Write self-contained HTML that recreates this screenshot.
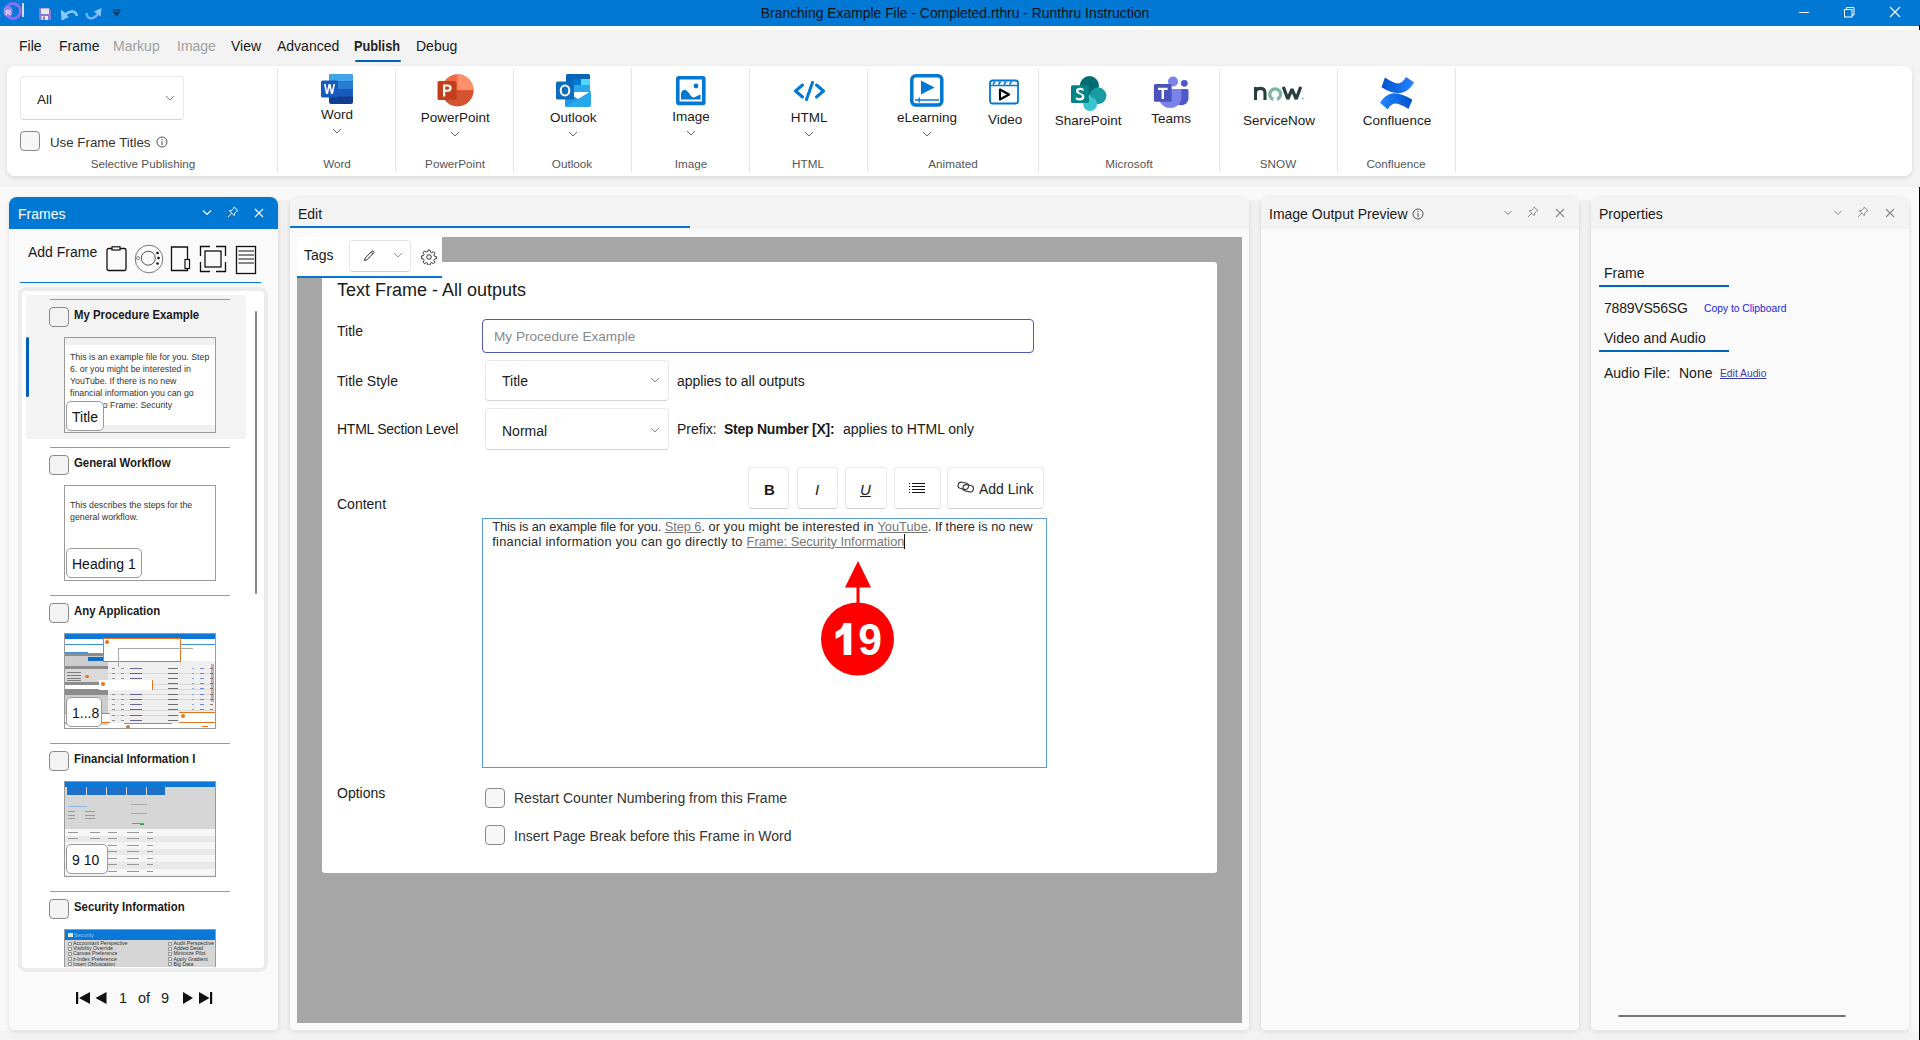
<!DOCTYPE html>
<html><head><meta charset="utf-8">
<style>
*{box-sizing:border-box;margin:0;padding:0}
html,body{width:1920px;height:1040px;overflow:hidden;background:#f9f9f9;font-family:"Liberation Sans",sans-serif;color:#1a1a1a;position:relative}
.a{position:absolute;white-space:nowrap}
#tb{left:0;top:0;width:1920px;height:26px;background:#0078d4}
#tbw{left:0;top:26px;width:1919px;height:4px;background:#fff}
#topbg{left:0;top:30px;width:1920px;height:157px;background:#f3f3f3}
.menu{top:38px;font-size:14px;color:#1a1a1a}
.ribbon{left:7px;top:66px;width:1905px;height:110px;background:#fff;border-radius:8px;box-shadow:0 2px 5px rgba(0,0,0,.10)}
.sep{top:69px;width:1px;height:103px;background:#e5e5e5}
.glab{top:156px;font-size:12px;color:#555;transform:translateX(-50%)}
.blab{font-size:14px;color:#1a1a1a;transform:translateX(-50%)}
.chev{width:7px;height:7px;border-right:1.2px solid #555;border-bottom:1.2px solid #555;transform:translateX(-50%) rotate(45deg)}
.panel{background:#fafafa;border-radius:8px 8px 5px 5px;box-shadow:0 0 4px rgba(0,0,0,.07),0 3px 5px rgba(0,0,0,.06)}
.phead{background:#f3f3f3;border-radius:8px 8px 0 0}
.lbl{font-size:14px;color:#1a1a1a}
.dd{background:#fff;border:1px solid #e8e8e8;border-bottom-color:#d4d4d4;border-radius:4px}
.tbtn{background:#fff;border:1px solid #e8e8e8;border-bottom-color:#d0d0d0;border-radius:4px}
.ct{font-size:12.8px;color:#2a2a2a}
.lk{color:#777;text-decoration-color:#777}
.cb{width:20px;height:20px;border:1px solid #8a8a8a;border-radius:4px;background:#f7f7f7}
.thumb{width:152px;border:1px solid #9a9a9a;background:#fff}
.tht{font-size:8.8px;line-height:12px;color:#333}
.badge{height:30px;background:#fff;border:1px solid #9a9a9a;border-radius:5px;font-size:14px;color:#111;padding:7px 0 0 5px}
</style></head><body>
<!-- title bar -->
<div class="a" id="tb"></div>
<div class="a" id="tbw"></div>
<div class="a" id="topbg"></div>
<div class="a" style="left:278px;top:200px;width:12px;height:840px;background:#f0f0f0"></div>
<div class="a" style="left:1249px;top:200px;width:12px;height:840px;background:#f0f0f0"></div>
<div class="a" style="left:1579px;top:200px;width:12px;height:840px;background:#f0f0f0"></div>
<div class="a" style="left:0;top:1031px;width:1919px;height:9px;background:#f3f3f3"></div>
<div class="a" style="left:1919px;top:25px;width:1px;height:5px;background:#000"></div>
<div class="a" style="left:1919px;top:187px;width:1px;height:853px;background:#000"></div>
<div class="a" style="left:0;top:5px;width:960px;text-align:right;font-size:13.9px;color:#111;left:755px;width:400px;text-align:center">Branching Example File - Completed.rthru - Runthru Instruction</div>

<!-- menu -->
<div class="a menu" style="left:19px">File</div>
<div class="a menu" style="left:59px">Frame</div>
<div class="a menu" style="left:113px;color:#a0a0a0">Markup</div>
<div class="a menu" style="left:177px;color:#a0a0a0">Image</div>
<div class="a menu" style="left:231px">View</div>
<div class="a menu" style="left:277px">Advanced</div>
<div class="a menu" style="left:354px;font-weight:bold;color:#222;transform:scaleX(0.91);transform-origin:0 0">Publish</div>
<div class="a menu" style="left:416px">Debug</div>
<div class="a" style="left:354.5px;top:59.5px;width:46px;height:2.5px;background:#005fb8;border-radius:1.5px"></div>

<!-- ribbon -->
<div class="a ribbon"></div>
<div class="a sep" style="left:277px"></div>
<div class="a sep" style="left:395px"></div>
<div class="a sep" style="left:513px"></div>
<div class="a sep" style="left:631px"></div>
<div class="a sep" style="left:749px"></div>
<div class="a sep" style="left:867px"></div>
<div class="a sep" style="left:1038px"></div>
<div class="a sep" style="left:1219px"></div>
<div class="a sep" style="left:1337px"></div>
<div class="a sep" style="left:1455px"></div>



<!-- ribbon content -->
<div class="a dd" style="left:20px;top:76px;width:164px;height:44px"></div>
<div class="a" style="left:37px;top:91.5px;font-size:13.5px">All</div>
<svg class="a" style="left:165px;top:95px" width="10" height="6" viewBox="0 0 10 6"><path d="M1 1 L5 5 L9 1" fill="none" stroke="#888" stroke-width="1"/></svg>
<div class="a cb" style="left:20px;top:131px"></div>
<div class="a" style="left:50px;top:135px;font-size:13.3px;color:#333">Use Frame Titles</div>
<svg class="a" style="left:156px;top:136px" width="12" height="12" viewBox="0 0 12 12"><circle cx="6" cy="6" r="5" fill="none" stroke="#444" stroke-width="0.9"/><rect x="5.5" y="5" width="1" height="4" fill="#444"/><rect x="5.5" y="3" width="1" height="1" fill="#444"/></svg>
<div class="a" style="left:43px;width:200px;text-align:center;top:157.4px;font-size:11.7px;color:#555;">Selective Publishing</div>
<div class="a" style="left:237px;width:200px;text-align:center;top:157.2px;font-size:11.7px;color:#555;">Word</div>
<div class="a" style="left:355px;width:200px;text-align:center;top:157.2px;font-size:11.7px;color:#555;">PowerPoint</div>
<div class="a" style="left:472px;width:200px;text-align:center;top:157.2px;font-size:11.7px;color:#555;">Outlook</div>
<div class="a" style="left:591px;width:200px;text-align:center;top:157.2px;font-size:11.7px;color:#555;">Image</div>
<div class="a" style="left:708px;width:200px;text-align:center;top:157.2px;font-size:11.7px;color:#555;">HTML</div>
<div class="a" style="left:853px;width:200px;text-align:center;top:157.2px;font-size:11.7px;color:#555;">Animated</div>
<div class="a" style="left:1029px;width:200px;text-align:center;top:157.2px;font-size:11.7px;color:#555;">Microsoft</div>
<div class="a" style="left:1178px;width:200px;text-align:center;top:157.2px;font-size:11.7px;color:#555;">SNOW</div>
<div class="a" style="left:1296px;width:200px;text-align:center;top:157.2px;font-size:11.7px;color:#555;">Confluence</div>
<div class="a" style="left:237px;width:200px;text-align:center;top:106.5px;font-size:13.5px;color:#1a1a1a;">Word</div>
<div class="a" style="left:355.2px;width:200px;text-align:center;top:109.8px;font-size:13.5px;color:#1a1a1a;">PowerPoint</div>
<div class="a" style="left:473.20000000000005px;width:200px;text-align:center;top:109.6px;font-size:13.5px;color:#1a1a1a;">Outlook</div>
<div class="a" style="left:591.1px;width:200px;text-align:center;top:108.6px;font-size:13.5px;color:#1a1a1a;">Image</div>
<div class="a" style="left:709.2px;width:200px;text-align:center;top:109.8px;font-size:13.5px;color:#1a1a1a;">HTML</div>
<div class="a" style="left:827px;width:200px;text-align:center;top:109.8px;font-size:13.5px;color:#1a1a1a;">eLearning</div>
<div class="a" style="left:905.1px;width:200px;text-align:center;top:112.2px;font-size:13.5px;color:#1a1a1a;">Video</div>
<div class="a" style="left:988.2px;width:200px;text-align:center;top:113.3px;font-size:13.5px;color:#1a1a1a;">SharePoint</div>
<div class="a" style="left:1071.1px;width:200px;text-align:center;top:111.4px;font-size:13.5px;color:#1a1a1a;">Teams</div>
<div class="a" style="left:1179.1px;width:200px;text-align:center;top:112.8px;font-size:13.5px;color:#1a1a1a;">ServiceNow</div>
<div class="a" style="left:1297px;width:200px;text-align:center;top:112.8px;font-size:13.5px;color:#1a1a1a;">Confluence</div>
<svg class="a" style="left:332px;top:128px" width="10" height="6" viewBox="0 0 10 6"><path d="M1 1 L5 5 L9 1" fill="none" stroke="#666" stroke-width="1"/></svg>
<svg class="a" style="left:450px;top:131px" width="10" height="6" viewBox="0 0 10 6"><path d="M1 1 L5 5 L9 1" fill="none" stroke="#666" stroke-width="1"/></svg>
<svg class="a" style="left:568px;top:131px" width="10" height="6" viewBox="0 0 10 6"><path d="M1 1 L5 5 L9 1" fill="none" stroke="#666" stroke-width="1"/></svg>
<svg class="a" style="left:686px;top:130px" width="10" height="6" viewBox="0 0 10 6"><path d="M1 1 L5 5 L9 1" fill="none" stroke="#666" stroke-width="1"/></svg>
<svg class="a" style="left:804px;top:131px" width="10" height="6" viewBox="0 0 10 6"><path d="M1 1 L5 5 L9 1" fill="none" stroke="#666" stroke-width="1"/></svg>
<svg class="a" style="left:922px;top:131px" width="10" height="6" viewBox="0 0 10 6"><path d="M1 1 L5 5 L9 1" fill="none" stroke="#666" stroke-width="1"/></svg>
<svg class="a" style="left:321px;top:74px" width="33" height="31" viewBox="0 0 33 31">
<rect x="8" y="0" width="24" height="30" rx="2" fill="#103f91"/>
<path d="M10 0 H30 A2 2 0 0 1 32 2 V7.5 H8 V2 A2 2 0 0 1 10 0Z" fill="#41a5ee"/>
<rect x="8" y="7.5" width="24" height="7.5" fill="#2b7cd3"/>
<rect x="8" y="15" width="24" height="7.5" fill="#185abd"/>
<rect x="0" y="6.5" width="17" height="17" rx="1.5" fill="#1958bc"/>
<path d="M3 10 L5 20 L7 20 L8.5 13.5 L10 20 L12 20 L14 10 L12.3 10 L11 17 L9.5 10 L7.5 10 L6 17 L4.7 10Z" fill="#fff"/>
</svg>
<svg class="a" style="left:437px;top:74px" width="37" height="33" viewBox="0 0 37 33">
<circle cx="20.5" cy="16.3" r="16" fill="#ed6c47"/>
<path d="M20.5 0.3 A16 16 0 0 1 36.5 16.3 H20.5Z" fill="#ff8f6b"/>
<path d="M4.5 16.3 A16 16 0 0 0 36.5 16.3 H4.5Z" fill="#d35230"/>
<rect x="0.5" y="7" width="19" height="19" rx="1.5" fill="#c43e1c"/>
<path d="M6 10.5 H11 A3.6 3.6 0 0 1 11 17.7 H8.2 V22.5 H6Z M8.2 12.4 V15.8 H10.7 A1.7 1.7 0 0 0 10.7 12.4Z" fill="#fff"/>
</svg>
<svg class="a" style="left:556px;top:74px" width="36" height="33" viewBox="0 0 36 33">
<rect x="10" y="0" width="24" height="18" rx="1.5" fill="#0364b8"/>
<rect x="17" y="5" width="8" height="6" fill="#0078d4"/><rect x="25" y="5" width="9" height="6" fill="#50d9ff"/>
<rect x="17" y="11" width="8" height="7" fill="#28a8ea"/><rect x="25" y="11" width="9" height="7" fill="#28a8ea"/>
<rect x="10" y="11" width="7" height="7" fill="#0078d4"/>
<path d="M9 17 L22 25 L35 17 V31 A2 2 0 0 1 33 33 H11 A2 2 0 0 1 9 31Z" fill="#28a8ea"/>
<path d="M9 17 L22 25 L9 33Z" fill="#1490df" opacity=".6"/>
<rect x="0" y="7.5" width="18" height="18" rx="1.5" fill="#0f6cbd"/>
<ellipse cx="9" cy="16.5" rx="4.3" ry="5" fill="none" stroke="#fff" stroke-width="2"/>
</svg>
<svg class="a" style="left:676px;top:76px" width="30" height="30" viewBox="0 0 30 30">
<rect x="1.8" y="1.8" width="26" height="25.6" rx="1" fill="none" stroke="#0078d4" stroke-width="3.6"/>
<path d="M5 23.5 V17 Q7 12.5 10 14 Q13 16.5 15 20 Q17 22.5 20 20.5 L24.5 18.5 V23.5Z" fill="#0078d4"/>
<circle cx="20" cy="10" r="2.4" fill="#0078d4"/>
</svg>
<svg class="a" style="left:793px;top:81px" width="33" height="20" viewBox="0 0 33 20">
<path d="M9.5 4 L2.5 10 L9.5 16 M23.5 4 L30.5 10 L23.5 16 M19.5 1.5 L13.5 18.5" fill="none" stroke="#0078d4" stroke-width="3" stroke-linecap="round" stroke-linejoin="round"/>
</svg>
<svg class="a" style="left:910px;top:74px" width="34" height="34" viewBox="0 0 34 34">
<rect x="1.8" y="1.8" width="30" height="29.3" rx="4" fill="none" stroke="#0078d4" stroke-width="3.5"/>
<path d="M11 6.5 L24.5 13.5 L11 20.5Z" fill="#0078d4"/>
<path d="M5 26 H29" stroke="#0078d4" stroke-width="1.5"/><rect x="8.5" y="23.5" width="1.4" height="5" fill="#0078d4"/>
</svg>
<svg class="a" style="left:989px;top:79px" width="31" height="26" viewBox="0 0 31 26">
<rect x="1" y="1.5" width="28" height="23" rx="2.5" fill="none" stroke="#0078d4" stroke-width="1.8"/>
<path d="M1 6.5 H29" stroke="#0078d4" stroke-width="1.5"/>
<path d="M4 5.5 L6 2.5 M9.5 5.5 L11.5 2.5 M15 5.5 L17 2.5 M20.5 5.5 L22.5 2.5" stroke="#0078d4" stroke-width="1.6"/>
<path d="M11 10.5 L20 15.5 L11 20.5Z" fill="none" stroke="#000" stroke-width="2.1" stroke-linejoin="round"/>
</svg>
<svg class="a" style="left:1069px;top:75px" width="38" height="36" viewBox="0 0 38 36">
<circle cx="20.4" cy="10.7" r="9.6" fill="#036c70"/>
<circle cx="29.1" cy="20.8" r="8.3" fill="#1a9ba1"/>
<circle cx="21.1" cy="29" r="6.9" fill="#37c6d0"/>
<rect x="2" y="10.2" width="18" height="17.8" rx="1.5" fill="#038387"/>
<path d="M14.5 13.8 Q13 12.8 11 12.8 Q7 12.8 7 16 Q7 18.2 10.5 19.3 Q13 20 13 21.5 Q13 23.2 10.8 23.2 Q8.5 23.2 6.8 22 V24.5 Q8.5 25.4 10.7 25.4 Q15.4 25.4 15.4 21.7 Q15.4 19.5 12 18.3 Q9.4 17.5 9.4 16 Q9.4 14.9 11.2 14.9 Q13 14.9 14.5 16Z" fill="#fff"/>
</svg>
<svg class="a" style="left:1153px;top:75px" width="37" height="35" viewBox="0 0 37 35">
<path d="M21 14 H34 A1.5 1.5 0 0 1 35.5 15.5 V23 A7 7 0 0 1 21 23Z" fill="#5059c9"/>
<circle cx="31.3" cy="8.3" r="3.4" fill="#5059c9"/>
<circle cx="20" cy="6.5" r="5" fill="#7b83eb"/>
<path d="M6 14 H27 A1.5 1.5 0 0 1 28.5 15.5 V24 A11.5 11.5 0 0 1 6 24Z" fill="#7b83eb"/>
<rect x="0.9" y="9" width="17.8" height="17.8" rx="1.5" fill="#4b53bc"/>
<path d="M5 12.8 H14.6 V15 H11 V24 H8.6 V15 H5Z" fill="#fff"/>
</svg>
<svg class="a" style="left:1253px;top:86px" width="53" height="16" viewBox="0 0 53 16">
<path d="M2.5 14 V0.9 M2.5 6.5 Q2.8 2.4 7.5 2.4 Q12 2.4 12 7 V14" fill="none" stroke="#293e40" stroke-width="3.1"/>
<path d="M20.3 13.4 A5.4 5.4 0 1 1 24.1 13.4" fill="none" stroke="#81b5a1" stroke-width="3.3"/>
<path d="M30.3 0.9 L34.8 13 L39 3.2 L43.2 13 L47.7 0.9" fill="none" stroke="#293e40" stroke-width="3.2" stroke-linejoin="bevel"/>
<circle cx="49.7" cy="12.5" r="1.1" fill="#a9b9b3"/>
</svg>
<svg class="a" style="left:1380px;top:77px" width="35" height="33" viewBox="0 0 35 33">
<defs><linearGradient id="cg1" x1="0" y1="0" x2="1" y2="0"><stop offset="0" stop-color="#0052cc"/><stop offset="1" stop-color="#2684ff"/></linearGradient>
<linearGradient id="cg2" x1="1" y1="0" x2="0" y2="0"><stop offset="0" stop-color="#0052cc"/><stop offset="1" stop-color="#2684ff"/></linearGradient></defs>
<path d="M1.5 10.2 L4.9 0.5 Q13 6 18 6.5 Q22 6.5 26.2 0.1 L34 5.6 Q29 14 22.7 15.6 Q14 18 1.5 10.2 Z" fill="url(#cg1)"/>
<path d="M32.4 22.8 L28.4 32 Q20 26.5 15 26.5 Q10.5 26.8 7.8 32.5 L0 25.7 Q5 18 11.5 16.5 Q20 15 32.4 22.8 Z" fill="url(#cg2)"/>
</svg>
<svg class="a" style="left:2px;top:1px" width="20" height="19" viewBox="0 0 20 19">
<circle cx="11" cy="10" r="7.5" fill="none" stroke="#8b6df0" stroke-width="3"/><path d="M13 1.5 L17 3.5 L13 6Z" fill="#8b6df0"/>
<rect x="1.5" y="5.5" width="9" height="10" rx="4" fill="#9a7ff5"/><text x="3.2" y="13.6" font-size="8" font-family="Liberation Sans" font-weight="bold" fill="#e9e3ff">R</text>
</svg>
<div class="a" style="left:22px;top:3px;width:1.5px;height:14px;background:#d8d8d8"></div>
<svg class="a" style="left:38px;top:7px" width="14" height="14" viewBox="0 0 14 14">
<path d="M1 1 H11 L13 3 V13 H1Z" fill="#8a7ad6"/><rect x="3" y="1.5" width="8" height="5.5" fill="#e8e8e8"/><rect x="3.5" y="9" width="6.5" height="4" fill="#e8e8e8"/><rect x="5" y="9.5" width="2" height="3.5" fill="#8a7ad6"/>
</svg>
<svg class="a" style="left:61px;top:7px" width="17" height="14" viewBox="0 0 17 14">
<path d="M2 13 L1 5 L4.5 7.5 Q8 4 12 4.5 Q15.5 5.5 15.8 9" fill="none" stroke="#8ac6ff" stroke-width="2.4"/><path d="M0.5 13.5 L1 4 L8 10Z" fill="#8ac6ff"/>
</svg>
<svg class="a" style="left:85px;top:7px" width="17" height="14" viewBox="0 0 17 14">
<path d="M1.5 6 Q2 12.5 8 11 Q11 10 13.5 6.5" fill="none" stroke="#6eb5ff" stroke-width="2.4"/><path d="M16.5 1 L15.5 9.5 L9 4.5Z" fill="#8ac6ff"/>
</svg>
<svg class="a" style="left:112px;top:9px" width="9" height="8" viewBox="0 0 9 8"><rect x="0.5" y="0.5" width="8" height="1.2" fill="#0a3a6a"/><path d="M0.5 2.8 H8.5 L4.5 7.5Z" fill="#0a3a6a"/></svg>
<div class="a" style="left:1799px;top:12px;width:10px;height:1px;background:#fff"></div>
<svg class="a" style="left:1843px;top:6px" width="13" height="12" viewBox="0 0 13 12"><rect x="1.5" y="3.5" width="7.5" height="7.5" fill="none" stroke="#fff" stroke-width="1"/><path d="M3.5 3.5 V1.5 H11 V9 H9" fill="none" stroke="#fff" stroke-width="1"/></svg>
<svg class="a" style="left:1889px;top:6px" width="12" height="12" viewBox="0 0 12 12"><path d="M1 1 L11 11 M11 1 L1 11" stroke="#fff" stroke-width="1.1"/></svg>

<!-- frames panel -->
<div class="a panel" style="left:9px;top:197px;width:269px;height:833px"></div>
<div class="a" style="left:9px;top:197px;width:269px;height:32px;background:#0078d4;border-radius:8px 8px 0 0"></div>
<div class="a" style="left:18px;top:206px;font-size:14px;color:#fff">Frames</div>


<!-- frames content -->
<svg class="a" style="left:202px;top:209px" width="10" height="7" viewBox="0 0 10 7"><path d="M1 1.5 L5 5.5 L9 1.5" fill="none" stroke="#fff" stroke-width="1.1"/></svg>
<svg class="a" style="left:227px;top:206px" width="12" height="12" viewBox="0 0 12 12"><path d="M7.2 1 L11 4.8 L9.5 5.3 L7.6 7.2 L7.2 9.6 L2.4 4.8 L4.8 4.4 L6.7 2.5 Z M4.8 7.2 L1 11" fill="none" stroke="#fff" stroke-width="1"/></svg>
<svg class="a" style="left:254px;top:208px" width="10" height="10" viewBox="0 0 10 10"><path d="M1 1 L9 9 M9 1 L1 9" fill="none" stroke="#fff" stroke-width="1.1"/></svg>
<div class="a" style="left:28px;top:244px;font-size:14px;color:#1a1a1a">Add Frame</div>
<svg class="a" style="left:106px;top:246px" width="22" height="26" viewBox="0 0 22 26"><rect x="1" y="2.5" width="19" height="22" rx="1.5" fill="none" stroke="#111" stroke-width="1.3"/><rect x="6" y="0.8" width="8" height="3.2" fill="#fff" stroke="#111" stroke-width="1.2"/></svg>
<svg class="a" style="left:134px;top:244px" width="30" height="30" viewBox="0 0 30 30"><circle cx="15" cy="15" r="13.8" fill="none" stroke="#777" stroke-width="1"/><circle cx="14.3" cy="14.2" r="7" fill="none" stroke="#555" stroke-width="1"/><circle cx="4" cy="14.2" r="1.5" fill="none" stroke="#777" stroke-width="0.9"/><circle cx="23.5" cy="9" r="1.3" fill="#111"/><circle cx="24.5" cy="14" r="1.3" fill="#111"/><circle cx="23.5" cy="19.5" r="1.3" fill="#111"/></svg>
<svg class="a" style="left:170px;top:246px" width="22" height="27" viewBox="0 0 22 27"><path d="M1.5 1 H17.5 V24.5 H1.5 Z" fill="none" stroke="#111" stroke-width="1.3"/><rect x="15" y="13.5" width="4.5" height="9" fill="#fff" stroke="#111" stroke-width="1.2"/></svg>
<svg class="a" style="left:199px;top:245px" width="28" height="28" viewBox="0 0 28 28"><path d="M1.5 11 V1.5 H11 M17 1.5 H26.5 V11 M26.5 17 V26.5 H17 M11 26.5 H1.5 V17" fill="none" stroke="#111" stroke-width="1.3"/><rect x="6" y="6" width="16" height="16" fill="none" stroke="#111" stroke-width="1.3"/></svg>
<svg class="a" style="left:235px;top:245px" width="22" height="30" viewBox="0 0 22 30"><rect x="1.5" y="1.5" width="19" height="27" fill="none" stroke="#111" stroke-width="1.3"/><path d="M3.5 6 H19 M3.5 10 H19 M3.5 14 H19 M3.5 18 H19" stroke="#111" stroke-width="1.1"/></svg>
<div class="a" style="left:20px;top:282px;width:241px;height:1px;background:#0078d4"></div>

<div class="a" style="left:18px;top:287px;width:250px;height:685px;background:#fff;border:4px solid #ececec;border-radius:8px"></div>
<div class="a" style="left:26px;top:295px;width:220px;height:144px;background:#f3f3f3;border-radius:3px"></div>
<div class="a" style="left:26px;top:337px;width:3px;height:60px;background:#005fb8;border-radius:2px"></div>
<div class="a" style="left:255px;top:311px;width:2px;height:283px;background:#8a8a8a;border-radius:1px"></div>
<div class="a" style="left:50px;top:299px;width:180px;height:1px;background:#9a9a9a"></div>
<div class="a cb" style="left:49px;top:307px;background:#f3f3f3"></div>
<div class="a" style="left:74px;top:307px;font-size:13px;font-weight:bold;color:#1a1a1a;transform:scaleX(0.875);transform-origin:0 0">My Procedure Example</div>
<div class="a thumb" style="left:64px;top:337px;height:96px" id="th0"></div>
<div class="a" style="left:50px;top:447px;width:180px;height:1px;background:#9a9a9a"></div>
<div class="a cb" style="left:49px;top:455px;background:#f3f3f3"></div>
<div class="a" style="left:74px;top:455px;font-size:13px;font-weight:bold;color:#1a1a1a;transform:scaleX(0.875);transform-origin:0 0">General Workflow</div>
<div class="a thumb" style="left:64px;top:485px;height:96px" id="th1"></div>
<div class="a" style="left:50px;top:595px;width:180px;height:1px;background:#9a9a9a"></div>
<div class="a cb" style="left:49px;top:603px;background:#f3f3f3"></div>
<div class="a" style="left:74px;top:603px;font-size:13px;font-weight:bold;color:#1a1a1a;transform:scaleX(0.875);transform-origin:0 0">Any Application</div>
<div class="a thumb" style="left:64px;top:633px;height:96px" id="th2"></div>
<div class="a" style="left:50px;top:743px;width:180px;height:1px;background:#9a9a9a"></div>
<div class="a cb" style="left:49px;top:751px;background:#f3f3f3"></div>
<div class="a" style="left:74px;top:751px;font-size:13px;font-weight:bold;color:#1a1a1a;transform:scaleX(0.875);transform-origin:0 0">Financial Information I</div>
<div class="a thumb" style="left:64px;top:781px;height:96px" id="th3"></div>
<div class="a" style="left:50px;top:891px;width:180px;height:1px;background:#9a9a9a"></div>
<div class="a cb" style="left:49px;top:899px;background:#f3f3f3"></div>
<div class="a" style="left:74px;top:899px;font-size:13px;font-weight:bold;color:#1a1a1a;transform:scaleX(0.875);transform-origin:0 0">Security Information</div>
<div class="a thumb" style="left:64px;top:929px;height:38px;overflow:hidden;border-bottom:none" id="th4"></div>

<div class="a" style="left:65px;top:338px;width:150px;height:7px;background:#f0f0f0"></div>
<div class="a" style="left:65px;top:425px;width:150px;height:7px;background:#f0f0f0"></div>
<div class="a tht" style="left:70px;top:351px">This is an example file for you. Step<br>6. or you might be interested in<br>YouTube. If there is no new<br>financial information you can go<br>directly to Frame: Security</div>
<div class="a badge" style="left:66px;top:401px;width:38px">Title</div>
<div class="a tht" style="left:70px;top:499px">This describes the steps for the<br>general workflow.</div>
<div class="a badge" style="left:66px;top:548px;width:76px">Heading 1</div>

<div class="a" style="left:65px;top:634px;width:150px;height:94px;background:#fff;overflow:hidden">
 <div class="a" style="left:0;top:0;width:150px;height:4.5px;background:#0b78d8"></div>
 <div class="a" style="left:0;top:9.5px;width:150px;height:1px;background:#3d8fdc"></div>
 <div class="a" style="left:0;top:17.5px;width:23px;height:1.2px;background:#3d8fdc"></div>
 <div class="a" style="left:0;top:18.5px;width:43px;height:72px;background:#cdcdcd"></div>
 <div class="a" style="left:0;top:19px;width:43px;height:3px;background:#8c8c8c"></div>
 <div class="a" style="left:23px;top:23px;width:15px;height:4px;background:#0b6fd0"></div>
 <div class="a" style="left:0;top:32px;width:43px;height:3px;background:#8c8c8c"></div>
 <div class="a" style="left:0;top:35px;width:43px;height:13px;background:#dadada"></div>
 <div class="a" style="left:20px;top:40.5px;width:4px;height:3px;background:#e8731e;border-radius:2px"></div>
 <div class="a" style="left:0;top:48px;width:43px;height:3px;background:#8c8c8c"></div>
 <div class="a" style="left:0;top:51px;width:43px;height:4px;background:#fff"></div>
 <div class="a" style="left:0;top:55px;width:43px;height:6px;background:#8c8c8c"></div>
 <div class="a" style="left:43px;top:27px;width:107px;height:62px;background:#efefef"></div>
 <div class="a" style="left:43px;top:35px;width:107px;height:50px;background:repeating-linear-gradient(#efefef 0 4.5px,#d9d9d9 4.5px 5.2px)"></div>
 <div class="a" style="left:146px;top:30px;width:2.5px;height:38px;background:#b5b5b5"></div>
 <div class="a" style="left:47px;top:33.5px;width:3px;height:1.3px;background:#777;opacity:.75"></div>
 <div class="a" style="left:56px;top:33.5px;width:3px;height:1.3px;background:#777;opacity:.75"></div>
 <div class="a" style="left:65px;top:33.5px;width:12px;height:1.3px;background:#3a3a7a;opacity:.75"></div>
 <div class="a" style="left:103px;top:33.5px;width:10px;height:1.3px;background:#444;opacity:.75"></div>
 <div class="a" style="left:127px;top:33.5px;width:2px;height:1.3px;background:#5a8fd8;opacity:.75"></div>
 <div class="a" style="left:135px;top:33.5px;width:4px;height:1.3px;background:#3a6ad0;opacity:.75"></div>
 <div class="a" style="left:145px;top:33.5px;width:3px;height:1.3px;background:#8a4a3a;opacity:.75"></div>
 <div class="a" style="left:47px;top:38.5px;width:3px;height:1.3px;background:#777;opacity:.75"></div>
 <div class="a" style="left:56px;top:38.5px;width:3px;height:1.3px;background:#777;opacity:.75"></div>
 <div class="a" style="left:65px;top:38.5px;width:12px;height:1.3px;background:#3a3a7a;opacity:.75"></div>
 <div class="a" style="left:103px;top:38.5px;width:10px;height:1.3px;background:#444;opacity:.75"></div>
 <div class="a" style="left:127px;top:38.5px;width:2px;height:1.3px;background:#5a8fd8;opacity:.75"></div>
 <div class="a" style="left:135px;top:38.5px;width:4px;height:1.3px;background:#3a6ad0;opacity:.75"></div>
 <div class="a" style="left:145px;top:38.5px;width:3px;height:1.3px;background:#8a4a3a;opacity:.75"></div>
 <div class="a" style="left:47px;top:44px;width:3px;height:1.3px;background:#777;opacity:.75"></div>
 <div class="a" style="left:56px;top:44px;width:3px;height:1.3px;background:#777;opacity:.75"></div>
 <div class="a" style="left:65px;top:44px;width:12px;height:1.3px;background:#3a3a7a;opacity:.75"></div>
 <div class="a" style="left:103px;top:44px;width:10px;height:1.3px;background:#444;opacity:.75"></div>
 <div class="a" style="left:127px;top:44px;width:2px;height:1.3px;background:#5a8fd8;opacity:.75"></div>
 <div class="a" style="left:135px;top:44px;width:4px;height:1.3px;background:#3a6ad0;opacity:.75"></div>
 <div class="a" style="left:145px;top:44px;width:3px;height:1.3px;background:#8a4a3a;opacity:.75"></div>
 <div class="a" style="left:103px;top:49px;width:10px;height:1.3px;background:#444;opacity:.75"></div>
 <div class="a" style="left:127px;top:49px;width:2px;height:1.3px;background:#5a8fd8;opacity:.75"></div>
 <div class="a" style="left:135px;top:49px;width:4px;height:1.3px;background:#3a6ad0;opacity:.75"></div>
 <div class="a" style="left:145px;top:49px;width:3px;height:1.3px;background:#8a4a3a;opacity:.75"></div>
 <div class="a" style="left:103px;top:54px;width:10px;height:1.3px;background:#444;opacity:.75"></div>
 <div class="a" style="left:127px;top:54px;width:2px;height:1.3px;background:#5a8fd8;opacity:.75"></div>
 <div class="a" style="left:135px;top:54px;width:4px;height:1.3px;background:#3a6ad0;opacity:.75"></div>
 <div class="a" style="left:145px;top:54px;width:3px;height:1.3px;background:#8a4a3a;opacity:.75"></div>
 <div class="a" style="left:47px;top:59.5px;width:3px;height:1.3px;background:#777;opacity:.75"></div>
 <div class="a" style="left:56px;top:59.5px;width:3px;height:1.3px;background:#777;opacity:.75"></div>
 <div class="a" style="left:65px;top:59.5px;width:12px;height:1.3px;background:#3a3a7a;opacity:.75"></div>
 <div class="a" style="left:103px;top:59.5px;width:10px;height:1.3px;background:#444;opacity:.75"></div>
 <div class="a" style="left:127px;top:59.5px;width:2px;height:1.3px;background:#5a8fd8;opacity:.75"></div>
 <div class="a" style="left:135px;top:59.5px;width:4px;height:1.3px;background:#3a6ad0;opacity:.75"></div>
 <div class="a" style="left:145px;top:59.5px;width:3px;height:1.3px;background:#8a4a3a;opacity:.75"></div>
 <div class="a" style="left:47px;top:64.5px;width:3px;height:1.3px;background:#777;opacity:.75"></div>
 <div class="a" style="left:56px;top:64.5px;width:3px;height:1.3px;background:#777;opacity:.75"></div>
 <div class="a" style="left:65px;top:64.5px;width:12px;height:1.3px;background:#3a3a7a;opacity:.75"></div>
 <div class="a" style="left:103px;top:64.5px;width:10px;height:1.3px;background:#444;opacity:.75"></div>
 <div class="a" style="left:127px;top:64.5px;width:2px;height:1.3px;background:#5a8fd8;opacity:.75"></div>
 <div class="a" style="left:135px;top:64.5px;width:4px;height:1.3px;background:#3a6ad0;opacity:.75"></div>
 <div class="a" style="left:145px;top:64.5px;width:3px;height:1.3px;background:#8a4a3a;opacity:.75"></div>
 <div class="a" style="left:47px;top:70px;width:3px;height:1.3px;background:#777;opacity:.75"></div>
 <div class="a" style="left:56px;top:70px;width:3px;height:1.3px;background:#777;opacity:.75"></div>
 <div class="a" style="left:65px;top:70px;width:12px;height:1.3px;background:#3a3a7a;opacity:.75"></div>
 <div class="a" style="left:103px;top:70px;width:10px;height:1.3px;background:#444;opacity:.75"></div>
 <div class="a" style="left:127px;top:70px;width:2px;height:1.3px;background:#5a8fd8;opacity:.75"></div>
 <div class="a" style="left:135px;top:70px;width:4px;height:1.3px;background:#3a6ad0;opacity:.75"></div>
 <div class="a" style="left:145px;top:70px;width:3px;height:1.3px;background:#8a4a3a;opacity:.75"></div>
 <div class="a" style="left:47px;top:75px;width:3px;height:1.3px;background:#777;opacity:.75"></div>
 <div class="a" style="left:56px;top:75px;width:3px;height:1.3px;background:#777;opacity:.75"></div>
 <div class="a" style="left:65px;top:75px;width:12px;height:1.3px;background:#3a3a7a;opacity:.75"></div>
 <div class="a" style="left:103px;top:75px;width:10px;height:1.3px;background:#444;opacity:.75"></div>
 <div class="a" style="left:127px;top:75px;width:2px;height:1.3px;background:#5a8fd8;opacity:.75"></div>
 <div class="a" style="left:135px;top:75px;width:4px;height:1.3px;background:#3a6ad0;opacity:.75"></div>
 <div class="a" style="left:145px;top:75px;width:3px;height:1.3px;background:#8a4a3a;opacity:.75"></div>
 <div class="a" style="left:47px;top:80.5px;width:3px;height:1.3px;background:#777;opacity:.75"></div>
 <div class="a" style="left:56px;top:80.5px;width:3px;height:1.3px;background:#777;opacity:.75"></div>
 <div class="a" style="left:65px;top:80.5px;width:12px;height:1.3px;background:#3a3a7a;opacity:.75"></div>
 <div class="a" style="left:103px;top:80.5px;width:10px;height:1.3px;background:#444;opacity:.75"></div>
 <div class="a" style="left:127px;top:80.5px;width:2px;height:1.3px;background:#5a8fd8;opacity:.75"></div>
 <div class="a" style="left:135px;top:80.5px;width:4px;height:1.3px;background:#3a6ad0;opacity:.75"></div>
 <div class="a" style="left:145px;top:80.5px;width:3px;height:1.3px;background:#8a4a3a;opacity:.75"></div>
 <div class="a" style="left:47px;top:85.5px;width:3px;height:1.3px;background:#777;opacity:.75"></div>
 <div class="a" style="left:56px;top:85.5px;width:3px;height:1.3px;background:#777;opacity:.75"></div>
 <div class="a" style="left:65px;top:85.5px;width:12px;height:1.3px;background:#3a3a7a;opacity:.75"></div>
 <div class="a" style="left:103px;top:85.5px;width:10px;height:1.3px;background:#444;opacity:.75"></div>
 <div class="a" style="left:127px;top:85.5px;width:2px;height:1.3px;background:#5a8fd8;opacity:.75"></div>
 <div class="a" style="left:135px;top:85.5px;width:4px;height:1.3px;background:#3a6ad0;opacity:.75"></div>
 <div class="a" style="left:145px;top:85.5px;width:3px;height:1.3px;background:#8a4a3a;opacity:.75"></div>
 <div class="a" style="left:2px;top:38px;width:14px;height:1.2px;background:#666;opacity:.8"></div>
 <div class="a" style="left:2px;top:41px;width:14px;height:1.2px;background:#666;opacity:.8"></div>
 <div class="a" style="left:2px;top:43.5px;width:14px;height:1.2px;background:#666;opacity:.8"></div>
 <div class="a" style="left:2px;top:46px;width:14px;height:1.2px;background:#666;opacity:.8"></div>
 <div class="a" style="left:38px;top:4px;width:78px;height:23.5px;background:#fff;border:1.2px solid #e8731e"></div>
 <div class="a" style="left:40px;top:5.5px;width:4px;height:4px;background:#e8731e;border-radius:2px"></div>
 <div class="a" style="left:53px;top:14px;width:75px;height:19px;border-top:1px solid #aaa;border-left:1px solid #aaa"></div>
 <div class="a" style="left:34px;top:46px;width:54px;height:10px;background:#fff;border-right:1.2px solid #e8731e"></div>
 <div class="a" style="left:36px;top:48px;width:4px;height:4px;background:#e8731e;border-radius:2px"></div>
 <div class="a" style="left:0;top:79px;width:45px;height:10px;background:#fff;border-top:1.2px solid #e8731e;border-bottom:1.2px solid #e8731e"></div>
 <div class="a" style="left:114px;top:78px;width:36px;height:11px;background:#fff;border-top:1.2px solid #e8731e;border-bottom:1.2px solid #e8731e"></div>
 <div class="a" style="left:116px;top:80px;width:4px;height:4px;background:#e8731e;border-radius:2px"></div>
 <div class="a" style="left:45px;top:89px;width:105px;height:6px;background:#fff"></div>
 <div class="a" style="left:59px;top:88.5px;width:48px;height:1.2px;background:#e8731e"></div>
 <div class="a" style="left:61px;top:91px;width:4px;height:4px;background:#e8731e;border-radius:2px"></div>
 <div class="a" style="left:45px;top:93.5px;width:15px;height:1.2px;background:#3d8fdc"></div>
 <div class="a" style="left:137px;top:91.5px;width:6px;height:1.5px;background:#e8731e"></div>
</div>
<div class="a badge" style="left:66px;top:697px;width:36px">1...8</div>
<div class="a" style="left:65px;top:782px;width:150px;height:94px;background:#d6d6d6;overflow:hidden">
 <div class="a" style="left:0;top:0;width:150px;height:4.5px;background:#0b78d8"></div>
 <div class="a" style="left:2px;top:4.5px;width:98px;height:8px;background:repeating-linear-gradient(90deg,#1e6fc8 0 19px,#d6d6d6 19px 20px)"></div>
 <div class="a" style="left:3px;top:24px;width:19px;height:1px;background:#8ab8ea"></div>
 <div class="a" style="left:0;top:47px;width:150px;height:48px;background:repeating-linear-gradient(#f6f6f6 0 6.6px,#e9e9e9 6.6px 13.2px)"></div>
 <div class="a" style="left:75px;top:41px;width:4px;height:2px;background:#2ca02c"></div>
 <div class="a" style="left:3px;top:49.5px;width:10px;height:1.2px;background:#999"></div>
 <div class="a" style="left:25px;top:49.5px;width:10px;height:1.2px;background:#999"></div>
 <div class="a" style="left:43px;top:49.5px;width:9px;height:1.2px;background:#999"></div>
 <div class="a" style="left:62px;top:49.5px;width:12px;height:1.2px;background:#999"></div>
 <div class="a" style="left:82px;top:49.5px;width:6px;height:1.2px;background:#999"></div>
 <div class="a" style="left:3px;top:56px;width:10px;height:1.2px;background:#999"></div>
 <div class="a" style="left:25px;top:56px;width:10px;height:1.2px;background:#999"></div>
 <div class="a" style="left:43px;top:56px;width:9px;height:1.2px;background:#999"></div>
 <div class="a" style="left:62px;top:56px;width:12px;height:1.2px;background:#999"></div>
 <div class="a" style="left:82px;top:56px;width:6px;height:1.2px;background:#999"></div>
 <div class="a" style="left:3px;top:62.5px;width:10px;height:1.2px;background:#999"></div>
 <div class="a" style="left:25px;top:62.5px;width:10px;height:1.2px;background:#999"></div>
 <div class="a" style="left:43px;top:62.5px;width:9px;height:1.2px;background:#999"></div>
 <div class="a" style="left:62px;top:62.5px;width:12px;height:1.2px;background:#999"></div>
 <div class="a" style="left:82px;top:62.5px;width:6px;height:1.2px;background:#999"></div>
 <div class="a" style="left:3px;top:69px;width:10px;height:1.2px;background:#999"></div>
 <div class="a" style="left:25px;top:69px;width:10px;height:1.2px;background:#999"></div>
 <div class="a" style="left:43px;top:69px;width:9px;height:1.2px;background:#999"></div>
 <div class="a" style="left:62px;top:69px;width:12px;height:1.2px;background:#999"></div>
 <div class="a" style="left:82px;top:69px;width:6px;height:1.2px;background:#999"></div>
 <div class="a" style="left:3px;top:75.5px;width:10px;height:1.2px;background:#999"></div>
 <div class="a" style="left:25px;top:75.5px;width:10px;height:1.2px;background:#999"></div>
 <div class="a" style="left:43px;top:75.5px;width:9px;height:1.2px;background:#999"></div>
 <div class="a" style="left:62px;top:75.5px;width:12px;height:1.2px;background:#999"></div>
 <div class="a" style="left:82px;top:75.5px;width:6px;height:1.2px;background:#999"></div>
 <div class="a" style="left:3px;top:82px;width:10px;height:1.2px;background:#999"></div>
 <div class="a" style="left:25px;top:82px;width:10px;height:1.2px;background:#999"></div>
 <div class="a" style="left:43px;top:82px;width:9px;height:1.2px;background:#999"></div>
 <div class="a" style="left:62px;top:82px;width:12px;height:1.2px;background:#999"></div>
 <div class="a" style="left:82px;top:82px;width:6px;height:1.2px;background:#999"></div>
 <div class="a" style="left:3px;top:88.5px;width:10px;height:1.2px;background:#999"></div>
 <div class="a" style="left:25px;top:88.5px;width:10px;height:1.2px;background:#999"></div>
 <div class="a" style="left:43px;top:88.5px;width:9px;height:1.2px;background:#999"></div>
 <div class="a" style="left:62px;top:88.5px;width:12px;height:1.2px;background:#999"></div>
 <div class="a" style="left:82px;top:88.5px;width:6px;height:1.2px;background:#999"></div>
 <div class="a" style="left:3px;top:29px;width:7px;height:1.2px;background:#999"></div>
 <div class="a" style="left:20px;top:29px;width:10px;height:1.2px;background:#999"></div>
 <div class="a" style="left:3px;top:32.5px;width:7px;height:1.2px;background:#999"></div>
 <div class="a" style="left:20px;top:32.5px;width:10px;height:1.2px;background:#999"></div>
 <div class="a" style="left:3px;top:36px;width:7px;height:1.2px;background:#999"></div>
 <div class="a" style="left:20px;top:36px;width:10px;height:1.2px;background:#999"></div>
 <div class="a" style="left:66px;top:22px;width:16px;height:1px;background:#aaa"></div>
 <div class="a" style="left:66px;top:31px;width:16px;height:1px;background:#aaa"></div>
 <div class="a" style="left:67px;top:41px;width:12px;height:1.2px;background:#888"></div>
</div>
<div class="a badge" style="left:66px;top:844px;width:42px">9 10</div>
<div class="a" style="left:65px;top:930px;width:150px;height:37px;background:#d6d6d6;overflow:hidden">
 <div class="a" style="left:0;top:0;width:150px;height:10px;background:#0b78d8"></div>
 <div class="a" style="left:3px;top:2.5px;width:4.5px;height:4.5px;background:#dfe8d8"></div>
 <div class="a" style="left:9px;top:1.8px;font-size:5.5px;color:#9cc6f0">Security</div>
 <div class="a" style="left:2.5px;top:11.7px;width:4px;height:4px;border:0.6px solid #999;background:#e4e4e4"></div>
 <div class="a" style="left:8px;top:11.2px;font-size:5.2px;line-height:5px;color:#333">Accountant Perspective</div>
 <div class="a" style="left:103px;top:11.7px;width:4px;height:4px;border:0.6px solid #999;background:#e4e4e4"></div>
 <div class="a" style="left:108.5px;top:11.2px;font-size:5.2px;line-height:5px;color:#333">Audit Perspective</div>
 <div class="a" style="left:2.5px;top:16.8px;width:4px;height:4px;border:0.6px solid #999;background:#e4e4e4"></div>
 <div class="a" style="left:8px;top:16.3px;font-size:5.2px;line-height:5px;color:#333">Visibility Override</div>
 <div class="a" style="left:103px;top:16.8px;width:4px;height:4px;border:0.6px solid #999;background:#e4e4e4"></div>
 <div class="a" style="left:108.5px;top:16.3px;font-size:5.2px;line-height:5px;color:#333">Added Detail</div>
 <div class="a" style="left:2.5px;top:21.9px;width:4px;height:4px;border:0.6px solid #999;background:#e4e4e4"></div>
 <div class="a" style="left:8px;top:21.4px;font-size:5.2px;line-height:5px;color:#333">Canvas Preference</div>
 <div class="a" style="left:103px;top:21.9px;width:4px;height:4px;border:0.6px solid #999;background:#e4e4e4"></div>
 <div class="a" style="left:108.5px;top:21.4px;font-size:5.2px;line-height:5px;color:#333">Minimize Pilot</div>
 <div class="a" style="left:2.5px;top:27.0px;width:4px;height:4px;border:0.6px solid #999;background:#e4e4e4"></div>
 <div class="a" style="left:8px;top:26.5px;font-size:5.2px;line-height:5px;color:#333">z-Index Preference</div>
 <div class="a" style="left:103px;top:27.0px;width:4px;height:4px;border:0.6px solid #999;background:#e4e4e4"></div>
 <div class="a" style="left:108.5px;top:26.5px;font-size:5.2px;line-height:5px;color:#333">Apply Gradient</div>
 <div class="a" style="left:2.5px;top:32.1px;width:4px;height:4px;border:0.6px solid #999;background:#e4e4e4"></div>
 <div class="a" style="left:8px;top:31.6px;font-size:5.2px;line-height:5px;color:#333">Insert Obfuscation</div>
 <div class="a" style="left:103px;top:32.1px;width:4px;height:4px;border:0.6px solid #999;background:#e4e4e4"></div>
 <div class="a" style="left:108.5px;top:31.6px;font-size:5.2px;line-height:5px;color:#333">Big Data</div>
</div>
<svg class="a" style="left:75px;top:991px" width="140" height="14" viewBox="0 0 140 14">
<rect x="1" y="1" width="2.2" height="12" fill="#111"/><path d="M15 1 L4 7 L15 13 Z" fill="#111"/>
<path d="M31.5 1 L20.5 7 L31.5 13 Z" fill="#111"/>
<path d="M108 1 L118 7 L108 13 Z" fill="#111"/>
<path d="M124 1 L134.5 7 L124 13 Z" fill="#111"/><rect x="135" y="1" width="2.2" height="12" fill="#111"/>
</svg>
<div class="a" style="left:119px;top:989.5px;font-size:14.5px;color:#1a1a1a">1</div>
<div class="a" style="left:138px;top:989.5px;font-size:14.5px;color:#1a1a1a">of</div>
<div class="a" style="left:161px;top:989.5px;font-size:14.5px;color:#1a1a1a">9</div>

<!-- edit panel -->
<div class="a panel" style="left:290px;top:197px;width:959px;height:833px"></div>
<div class="a phead" style="left:290px;top:197px;width:959px;height:32px"></div>
<div class="a" style="left:298px;top:206px;font-size:14px">Edit</div>
<div class="a" style="left:290px;top:226px;width:400px;height:2px;background:#0078d4"></div>


<!-- edit content -->
<div class="a" style="left:297px;top:237px;width:945px;height:786px;background:#a6a6a6"></div>
<div class="a" style="left:322px;top:262px;width:895px;height:611px;background:#fff;border-radius:3px"></div>
<div class="a" style="left:297px;top:237px;width:145px;height:40px;background:#fff"></div>
<div class="a" style="left:297px;top:276px;width:145px;height:1.5px;background:#0078d4"></div>
<div class="a" style="left:304px;top:247px;font-size:14px">Tags</div>
<div class="a" style="left:349px;top:240px;width:62px;height:32px;background:#fff;border:1px solid #e5e5e5;border-bottom-color:#d0d0d0;border-radius:4px"></div>
<svg class="a" style="left:363px;top:250px" width="12" height="12" viewBox="0 0 12 12"><path d="M1.5 10.5 L2.2 8 L9 1.2 Q9.8 0.6 10.6 1.4 Q11.3 2.2 10.7 2.9 L4 9.8 Z M8 2.2 L9.8 4" fill="none" stroke="#333" stroke-width="1"/></svg>
<svg class="a" style="left:393px;top:252px" width="10" height="6" viewBox="0 0 10 6"><path d="M1 1 L5 5 L9 1" fill="none" stroke="#999" stroke-width="1"/></svg>
<svg class="a" style="left:421px;top:249px" width="16" height="16" viewBox="0 0 16 16"><path d="M6.9 1.2h2.2l.4 2 1.2.6 1.8-1.1 1.5 1.5-1.1 1.8.5 1.2 2 .4v2.2l-2 .4-.5 1.2 1.1 1.8-1.5 1.5-1.8-1.1-1.2.5-.4 2H6.9l-.4-2-1.2-.5-1.8 1.1-1.5-1.5 1.1-1.8-.5-1.2-2-.4V6.9l2-.4.5-1.2-1.1-1.8 1.5-1.5 1.8 1.1 1.2-.6z" fill="none" stroke="#333" stroke-width="1"/><circle cx="8" cy="8" r="2.3" fill="none" stroke="#333" stroke-width="1"/></svg>

<div class="a" style="left:337px;top:280px;font-size:18px;color:#1a1a1a">Text Frame - All outputs</div>

<div class="a lbl" style="left:337px;top:323px">Title</div>
<div class="a" style="left:482px;top:319px;width:552px;height:34px;border:1.5px solid #4d5bb5;border-radius:4px;background:#fff"></div>
<div class="a" style="left:494px;top:329px;font-size:13.6px;color:#8a8a8a">My Procedure Example</div>

<div class="a lbl" style="left:337px;top:373px">Title Style</div>
<div class="a dd" style="left:485px;top:360px;width:184px;height:41px"></div>
<div class="a" style="left:502px;top:373px;font-size:14px">Title</div>
<svg class="a" style="left:650px;top:377px" width="10" height="6" viewBox="0 0 10 6"><path d="M1 1 L5 5 L9 1" fill="none" stroke="#888" stroke-width="1"/></svg>
<div class="a" style="left:677px;top:373px;font-size:14px">applies to all outputs</div>

<div class="a lbl" style="left:337px;top:421px;letter-spacing:-0.25px">HTML Section Level</div>
<div class="a dd" style="left:485px;top:408px;width:184px;height:42px"></div>
<div class="a" style="left:502px;top:423px;font-size:14px">Normal</div>
<svg class="a" style="left:650px;top:427px" width="10" height="6" viewBox="0 0 10 6"><path d="M1 1 L5 5 L9 1" fill="none" stroke="#888" stroke-width="1"/></svg>
<div class="a" style="left:677px;top:421px;font-size:14px">Prefix:</div>
<div class="a" style="left:724px;top:421px;font-size:14px;font-weight:bold;letter-spacing:-0.25px">Step Number [X]:</div>
<div class="a" style="left:843px;top:421px;font-size:14px">applies to HTML only</div>

<div class="a lbl" style="left:337px;top:496px">Content</div>
<div class="a tbtn" style="left:748px;top:467px;width:41px;height:42px"></div>
<div class="a" style="left:764px;top:481px;font-size:15px;font-weight:bold">B</div>
<div class="a tbtn" style="left:797px;top:467px;width:41px;height:42px"></div>
<div class="a" style="left:815px;top:481px;font-size:15px;font-style:italic">I</div>
<div class="a tbtn" style="left:845px;top:467px;width:42px;height:42px"></div>
<div class="a" style="left:860px;top:481px;font-size:15px;font-style:italic;text-decoration:underline">U</div>
<div class="a tbtn" style="left:894px;top:467px;width:47px;height:42px"></div>
<svg class="a" style="left:908px;top:482px" width="18" height="12" viewBox="0 0 18 12"><path d="M1 1.5h1.2M1 4.5h1.2M1 7.5h1.2M1 10.5h1.2M4 1.5h13M4 4.5h13M4 7.5h13M4 10.5h13" stroke="#111" stroke-width="1"/></svg>
<div class="a tbtn" style="left:947px;top:467px;width:97px;height:42px"></div>
<svg class="a" style="left:957px;top:481px" width="19" height="12" viewBox="0 0 19 12"><rect x="1" y="1.5" width="10.5" height="6.5" rx="3.25" fill="none" stroke="#333" stroke-width="1.1" transform="rotate(12 6 5)"/><rect x="6" y="4" width="10.5" height="6.5" rx="3.25" fill="none" stroke="#333" stroke-width="1.1" transform="rotate(12 11 7)"/></svg>
<div class="a" style="left:979px;top:481px;font-size:14px;color:#222">Add Link</div>

<div class="a" style="left:482px;top:518px;width:565px;height:250px;border:1px solid #5a9bdc;background:#fff"></div>
<div class="a ct" style="left:492.2px;top:519.4px;letter-spacing:-0.119px">This is an example file for you. </div>
<div class="a ct" style="left:664.7px;top:519.4px;letter-spacing:-0.076px"><u class="lk">Step 6</u></div>
<div class="a ct" style="left:701.2px;top:519.4px;letter-spacing:0.127px">. or you might be interested in </div>
<div class="a ct" style="left:877.5px;top:519.4px;letter-spacing:-0.000px"><u class="lk">YouTube</u></div>
<div class="a ct" style="left:927.8px;top:519.4px;letter-spacing:0.006px">. If there is no new</div>
<div class="a ct" style="left:492.2px;top:533.8px;letter-spacing:0.278px">financial information you can go directly to </div>
<div class="a ct" style="left:746.6px;top:533.8px;letter-spacing:-0.001px"><u class="lk">Frame: Security Information</u></div>
<div class="a" style="left:903.5px;top:534px;width:1.2px;height:15px;background:#111"></div>

<svg class="a" style="left:818px;top:558px" width="80" height="120" viewBox="0 0 80 120"><path d="M40 3 L53 29.5 L27 29.5 Z" fill="#f00"/><rect x="38.5" y="28" width="3" height="18" fill="#f00"/><circle cx="39.5" cy="81" r="36.5" fill="#f00"/></svg>
<svg class="a" style="left:830px;top:615px" width="56" height="46" viewBox="0 0 56 46">
<path d="M13.6 8 H21.3 V40 H13.6 V18.8 Q10 22.3 5.6 24 V16.8 Q8.3 15.8 10.8 13.5 Q12.9 11.3 13.6 8 Z" fill="#fff"/>
<text x="28.3" y="40" font-family="Liberation Sans" font-weight="bold" font-size="45" fill="#fff" transform="translate(28 0) scale(0.95 1) translate(-28 0)">9</text>
</svg>

<div class="a lbl" style="left:337px;top:785px">Options</div>
<div class="a cb" style="left:485px;top:788px"></div>
<div class="a" style="left:514px;top:790px;font-size:14px;color:#333">Restart Counter Numbering from this Frame</div>
<div class="a cb" style="left:485px;top:825px"></div>
<div class="a" style="left:514px;top:828px;font-size:14px;color:#333">Insert Page Break before this Frame in Word</div>

<!-- image output preview -->
<div class="a panel" style="left:1261px;top:197px;width:318px;height:833px"></div>
<div class="a phead" style="left:1261px;top:197px;width:318px;height:32px"></div>
<div class="a" style="left:1269px;top:206px;font-size:14px">Image Output Preview</div>

<!-- properties -->
<div class="a panel" style="left:1591px;top:197px;width:318px;height:833px"></div>
<div class="a phead" style="left:1591px;top:197px;width:318px;height:32px"></div>
<div class="a" style="left:1599px;top:206px;font-size:14px">Properties</div>


<svg class="a" style="left:1412px;top:208px" width="12" height="12" viewBox="0 0 12 12"><circle cx="6" cy="6" r="5" fill="none" stroke="#444" stroke-width="0.9"/><rect x="5.5" y="5" width="1" height="4" fill="#444"/><rect x="5.5" y="3" width="1" height="1" fill="#444"/></svg>
<svg class="a" style="left:1503px;top:209px" width="10" height="7" viewBox="0 0 10 7"><path d="M1.5 2 L5 5.5 L8.5 2" fill="none" stroke="#8a8a8a" stroke-width="1"/></svg>
<svg class="a" style="left:1527px;top:206px" width="12" height="12" viewBox="0 0 12 12"><path d="M7.2 1 L11 4.8 L9.5 5.3 L7.6 7.2 L7.2 9.6 L2.4 4.8 L4.8 4.4 L6.7 2.5 Z M4.8 7.2 L1 11" fill="none" stroke="#8a8a8a" stroke-width="1"/></svg>
<svg class="a" style="left:1554px;top:207px" width="12" height="12" viewBox="0 0 12 12"><path d="M2 2 L10 10 M10 2 L2 10" fill="none" stroke="#8a8a8a" stroke-width="1.1"/></svg>
<svg class="a" style="left:1833px;top:209px" width="10" height="7" viewBox="0 0 10 7"><path d="M1.5 2 L5 5.5 L8.5 2" fill="none" stroke="#8a8a8a" stroke-width="1"/></svg>
<svg class="a" style="left:1857px;top:206px" width="12" height="12" viewBox="0 0 12 12"><path d="M7.2 1 L11 4.8 L9.5 5.3 L7.6 7.2 L7.2 9.6 L2.4 4.8 L4.8 4.4 L6.7 2.5 Z M4.8 7.2 L1 11" fill="none" stroke="#8a8a8a" stroke-width="1"/></svg>
<svg class="a" style="left:1884px;top:207px" width="12" height="12" viewBox="0 0 12 12"><path d="M2 2 L10 10 M10 2 L2 10" fill="none" stroke="#8a8a8a" stroke-width="1.1"/></svg>

<div class="a" style="left:1604px;top:264.5px;font-size:14px">Frame</div>
<div class="a" style="left:1599px;top:285px;width:130px;height:2px;background:#0067c0"></div>
<div class="a" style="left:1604px;top:299.5px;font-size:14px;letter-spacing:-0.2px">7889VS56SG</div>
<div class="a" style="left:1704px;top:303px;font-size:10.3px;color:#1c1cdc">Copy to Clipboard</div>
<div class="a" style="left:1604px;top:329.5px;font-size:14px">Video and Audio</div>
<div class="a" style="left:1599px;top:350px;width:130px;height:2px;background:#0067c0"></div>
<div class="a" style="left:1604px;top:365px;font-size:14px">Audio File:</div>
<div class="a" style="left:1679px;top:365px;font-size:14px">None</div>
<div class="a" style="left:1720px;top:368px;font-size:10.3px;color:#3c3ca8;text-decoration:underline">Edit Audio</div>
<div class="a" style="left:1618px;top:1015px;width:228px;height:2px;background:#777;border-radius:1px"></div>
</body></html>
